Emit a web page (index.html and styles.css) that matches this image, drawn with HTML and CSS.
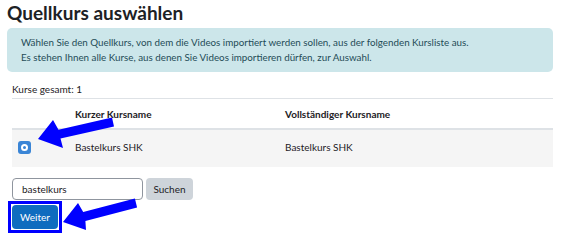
FILE: index.html
```html
<!DOCTYPE html>
<html lang="de">
<head>
    <meta charset="UTF-8">
    <meta name="viewport" content="width=device-width, initial-scale=1.0">
    <title>Quellkurs auswählen</title>
    <link rel="stylesheet" href="styles.css">
</head>
<body>
    <div class="page">
        <h1>Quellkurs auswählen</h1>

        <div class="alert">
            Wählen Sie den Quellkurs, von dem die Videos importiert werden sollen, aus der folgenden Kursliste aus.<br>
            Es stehen Ihnen alle Kurse, aus denen Sie Videos importieren dürfen, zur Auswahl.
        </div>

        <div class="content">
            <div class="total">Kurse gesamt: 1</div>
            <table class="courses">
                <thead>
                    <tr>
                        <th class="col-select"></th>
                        <th class="col-short">Kurzer Kursname</th>
                        <th>Vollständiger Kursname</th>
                    </tr>
                </thead>
                <tbody>
                    <tr>
                        <td class="col-select"><span class="radio"></span></td>
                        <td class="col-short">Bastelkurs SHK</td>
                        <td>Bastelkurs SHK</td>
                    </tr>
                </tbody>
            </table>

            <div class="search">
                <input type="text" value="bastelkurs">
                <button class="btn-secondary">Suchen</button>
            </div>
            <div class="highlight">
                <button class="btn-primary">Weiter</button>
            </div>
        </div>
    </div>

    <svg class="marks" width="562" height="240" viewBox="0 0 562 240">
        <polygon points="38,139 53,120 58.5,129.7 112,117.6 114,126.4 60.5,138.5 63,148" fill="#0000ff"/>
        <polygon points="63,222 78,203 83.2,212.1 134.9,198.6 137.1,207.4 85.4,220.9 86,230" fill="#0000ff"/>
    </svg>
</body>
</html>
```

FILE: styles.css
```css
body {
    font-family: Lato, "Noto Sans", sans-serif;
    margin: 0;
    background: #ffffff;
    color: #1d2125;
    position: relative;
    width: 562px;
    height: 240px;
    overflow: hidden;
}

.page {
    padding: 1px 9px 0 7px;
}

h1 {
    font-size: 19px;
    font-weight: 700;
    margin: 0;
    line-height: 24px;
}

.alert {
    margin-top: 3px;
    background-color: #cce6ea;
    color: #1f4c57;
    border-radius: 5px;
    padding: 7px 14px;
    font-size: 9.8px;
    line-height: 15px;
}

.content {
    padding-left: 5px;
}

.total {
    margin-top: 10px;
    font-size: 10px;
    line-height: 15px;
    padding-bottom: 1px;
    border-bottom: 1px solid #dee2e6;
}

.courses {
    width: 100%;
    border-collapse: collapse;
    font-size: 10px;
}

.courses th {
    text-align: left;
    font-weight: 700;
    height: 29px;
    padding: 0 6px;
    border-bottom: 2px solid #dee2e6;
    vertical-align: middle;
}

.courses td {
    background-color: #f5f5f5;
    height: 34px;
    padding: 0 6px 3px;
    vertical-align: middle;
}

.col-select {
    width: 45px;
}

.col-short {
    width: 198px;
}

.radio {
    display: block;
    width: 13px;
    height: 13px;
    border-radius: 3px;
    background-color: #3a85d6;
    position: relative;
}

.radio::after {
    content: "";
    position: absolute;
    left: 3px;
    top: 3px;
    width: 3px;
    height: 3px;
    border: 2px solid #ffffff;
    border-radius: 50%;
}

.search {
    display: flex;
    gap: 3px;
    margin-top: 11px;
}

.search input {
    width: 131px;
    height: 22px;
    box-sizing: border-box;
    border: 1px solid #8f959e;
    border-radius: 4px;
    padding: 0 9px;
    font-family: inherit;
    font-size: 10px;
    color: #1d2125;
}

.btn-secondary {
    height: 22px;
    width: 47px;
    padding: 0;
    background-color: #ced4da;
    border: none;
    border-radius: 4px;
    font-family: inherit;
    font-size: 10px;
    color: #1d2125;
}

.highlight {
    width: fit-content;
    margin: 1px 0 0 -4px;
    padding: 1px;
    border: 3px solid #0000ff;
}

.btn-primary {
    display: block;
    height: 24px;
    width: 46px;
    padding: 0;
    background-color: #0f6cbf;
    color: #ffffff;
    border: none;
    border-radius: 4px;
    font-family: inherit;
    font-size: 10px;
}

.marks {
    position: absolute;
    top: 0;
    left: 0;
    pointer-events: none;
}
```
